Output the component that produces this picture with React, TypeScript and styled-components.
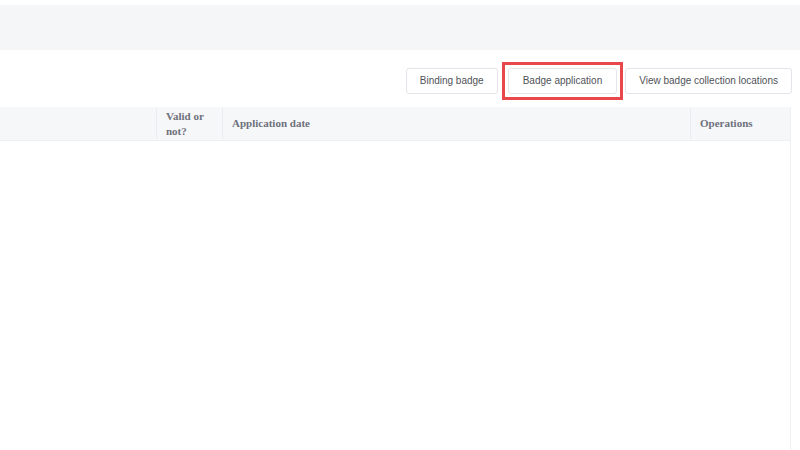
import React from "react";
import styled, { createGlobalStyle } from "styled-components";

const GlobalStyle = createGlobalStyle`
  html, body {
    margin: 0;
    padding: 0;
    background: #ffffff;
    font-family: "Liberation Sans", Arial, sans-serif;
  }
  #root {
    height: 450px;
    overflow: hidden;
  }
`;

const Page = styled.div`
  display: flex;
  flex-direction: column;
  height: 450px;
  padding-top: 5px;
  box-sizing: border-box;
`;

const TopBand = styled.div`
  height: 45px;
  background: #f5f6f8;
  flex-shrink: 0;
`;

const Toolbar = styled.div`
  display: flex;
  justify-content: flex-end;
  align-items: center;
  padding: 11px 8px 0 0;
  height: 39px;
  flex-shrink: 0;
`;

const Highlight = styled.div<{ $gap?: number }>`
  display: flex;
  margin-left: ${(p) => p.$gap ?? 0}px;
  padding: 3px;
  border: 3px solid #e8474b;
`;

const Button = styled.button<{ $gap?: number; $pad?: number }>`
  height: 26px;
  box-sizing: border-box;
  margin: 0 0 0 ${(p) => p.$gap ?? 0}px;
  padding: 0 ${(p) => p.$pad ?? 13}px;
  background: #ffffff;
  border: 1px solid #e3e5ea;
  border-radius: 3px;
  color: #505258;
  font-family: "Liberation Sans", Arial, sans-serif;
  font-size: 10px;
  line-height: 24px;
  white-space: nowrap;
  cursor: pointer;
`;

const Table = styled.div`
  margin-top: 7px;
  width: 791px;
  flex: 1;
  border-right: 1px solid #eef0f4;
  box-sizing: border-box;
  display: flex;
  flex-direction: column;
`;

const HeaderRow = styled.div`
  display: grid;
  grid-template-columns: 156px 66px 468px 1fr;
  height: 34px;
  background: #f6f7f9;
  border-bottom: 1px solid #eceef3;
  box-sizing: border-box;
`;

const HeaderCell = styled.div<{ $divider?: boolean }>`
  display: flex;
  align-items: center;
  padding: 0 9px;
  margin: 1px 0;
  border-left: ${(p) => (p.$divider ? "1px solid #eaecf0" : "none")};
  font-family: "Liberation Serif", "Times New Roman", serif;
  font-weight: bold;
  font-size: 11px;
  line-height: 15px;
  color: #6e717c;
`;

const Body = styled.div`
  flex: 1;
  background: #ffffff;
`;

export default function App() {
  return (
    <>
      <GlobalStyle />
      <Page>
        <TopBand />
        <Toolbar>
          <Button>Binding badge</Button>
          <Highlight $gap={4}>
            <Button $pad={14}>Badge application</Button>
          </Highlight>
          <Button $gap={2}>View badge collection locations</Button>
        </Toolbar>
        <Table>
          <HeaderRow>
            <HeaderCell />
            <HeaderCell $divider>Valid or not?</HeaderCell>
            <HeaderCell $divider>Application date</HeaderCell>
            <HeaderCell $divider>Operations</HeaderCell>
          </HeaderRow>
          <Body />
        </Table>
      </Page>
    </>
  );
}
